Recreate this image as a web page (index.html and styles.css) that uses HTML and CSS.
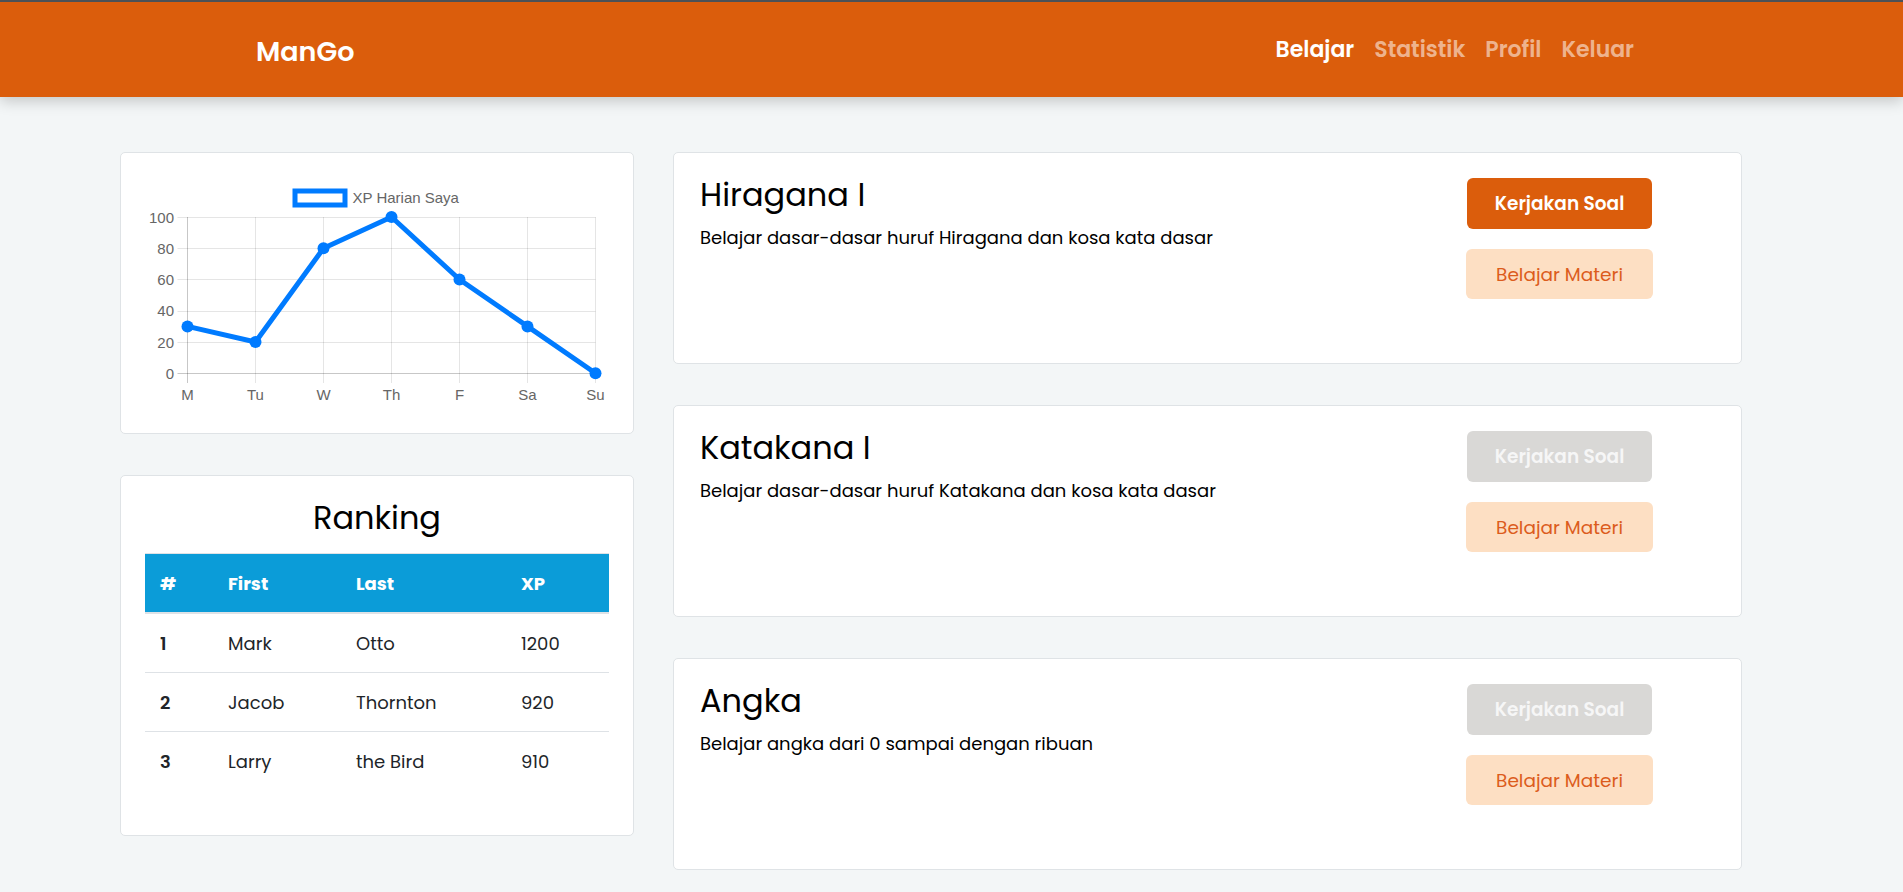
FILE: index.html
```html
<!DOCTYPE html>
<html lang="id">
<head>
<meta charset="utf-8">
<title>ManGo</title>
<link rel="stylesheet" href="styles.css">
</head>
<body>
<header class="navbar">
  <a class="brand" href="#">ManGo</a>
  <nav class="nav-links">
    <a class="nav-link active" href="#">Belajar</a>
    <a class="nav-link" href="#">Statistik</a>
    <a class="nav-link" href="#">Profil</a>
    <a class="nav-link" href="#">Keluar</a>
  </nav>
</header>
<main class="layout">
  <aside class="side">
    <section class="card chart-card">
      <svg class="chart" width="512" height="280" viewBox="0 0 512 280" xmlns="http://www.w3.org/2000/svg">
        <rect x="174" y="38" width="50" height="14" fill="#fff" stroke="#007bff" stroke-width="5"/>
        <text class="chart-text" x="231.5" y="49.5">XP Harian Saya</text>
        <g stroke="rgba(0,0,0,0.1)" stroke-width="1">
          <line x1="56.5" y1="64.5" x2="474.5" y2="64.5"/>
          <line x1="56.5" y1="95.5" x2="474.5" y2="95.5"/>
          <line x1="56.5" y1="126.5" x2="474.5" y2="126.5"/>
          <line x1="56.5" y1="158.5" x2="474.5" y2="158.5"/>
          <line x1="56.5" y1="189.5" x2="474.5" y2="189.5"/>
          <line x1="134.5" y1="64" x2="134.5" y2="230"/>
          <line x1="202.5" y1="64" x2="202.5" y2="230"/>
          <line x1="270.5" y1="64" x2="270.5" y2="230"/>
          <line x1="338.5" y1="64" x2="338.5" y2="230"/>
          <line x1="406.5" y1="64" x2="406.5" y2="230"/>
          <line x1="474.5" y1="64" x2="474.5" y2="230"/>
        </g>
        <g stroke="rgba(0,0,0,0.22)" stroke-width="1">
          <line x1="56.5" y1="220.5" x2="474.5" y2="220.5"/>
          <line x1="66.5" y1="64" x2="66.5" y2="230"/>
        </g>
        <g class="chart-text" text-anchor="end">
          <text x="53" y="69.5">100</text>
          <text x="53" y="100.8">80</text>
          <text x="53" y="132">60</text>
          <text x="53" y="163.3">40</text>
          <text x="53" y="194.5">20</text>
          <text x="53" y="225.8">0</text>
        </g>
        <g class="chart-text" text-anchor="middle">
          <text x="66.5" y="247">M</text>
          <text x="134.5" y="247">Tu</text>
          <text x="202.5" y="247">W</text>
          <text x="270.5" y="247">Th</text>
          <text x="338.5" y="247">F</text>
          <text x="406.5" y="247">Sa</text>
          <text x="474.5" y="247">Su</text>
        </g>
        <polyline points="66.5,173.4 134.5,189 202.5,95.3 270.5,64 338.5,126.5 406.5,173.4 474.5,220.3" fill="none" stroke="#007bff" stroke-width="5" stroke-linejoin="round"/>
        <g fill="#007bff">
          <circle cx="66.5" cy="173.4" r="6"/>
          <circle cx="134.5" cy="189" r="6"/>
          <circle cx="202.5" cy="95.3" r="6"/>
          <circle cx="270.5" cy="64" r="6"/>
          <circle cx="338.5" cy="126.5" r="6"/>
          <circle cx="406.5" cy="173.4" r="6"/>
          <circle cx="474.5" cy="220.3" r="6"/>
        </g>
      </svg>
    </section>
    <section class="card rank-card">
      <h2 class="rank-title">Ranking</h2>
      <table class="rank-table">
        <colgroup>
          <col class="c-no"><col class="c-first"><col class="c-last"><col class="c-xp">
        </colgroup>
        <thead>
          <tr><th>#</th><th>First</th><th>Last</th><th>XP</th></tr>
        </thead>
        <tbody>
          <tr><th>1</th><td>Mark</td><td>Otto</td><td>1200</td></tr>
          <tr><th>2</th><td>Jacob</td><td>Thornton</td><td>920</td></tr>
          <tr><th>3</th><td>Larry</td><td>the Bird</td><td>910</td></tr>
        </tbody>
      </table>
    </section>
  </aside>
  <section class="lessons">
    <article class="card lesson">
      <div class="lesson-text">
        <h3>Hiragana I</h3>
        <p>Belajar dasar-dasar huruf Hiragana dan kosa kata dasar</p>
      </div>
      <div class="lesson-actions">
        <button class="btn btn-main">Kerjakan Soal</button>
        <button class="btn btn-soft">Belajar Materi</button>
      </div>
    </article>
    <article class="card lesson">
      <div class="lesson-text">
        <h3>Katakana I</h3>
        <p>Belajar dasar-dasar huruf Katakana dan kosa kata dasar</p>
      </div>
      <div class="lesson-actions">
        <button class="btn btn-main btn-disabled">Kerjakan Soal</button>
        <button class="btn btn-soft">Belajar Materi</button>
      </div>
    </article>
    <article class="card lesson">
      <div class="lesson-text">
        <h3>Angka</h3>
        <p>Belajar angka dari 0 sampai dengan ribuan</p>
      </div>
      <div class="lesson-actions">
        <button class="btn btn-main btn-disabled">Kerjakan Soal</button>
        <button class="btn btn-soft">Belajar Materi</button>
      </div>
    </article>
  </section>
</main>
</body>
</html>
```

FILE: styles.css
```css
html {
  border-top: 2px solid #4b5157;
  background: #f3f6f7;
  overflow-y: scroll;
}

::-webkit-scrollbar {
  width: 4px;
}

::-webkit-scrollbar-track {
  background: #f1f1f1;
}

::-webkit-scrollbar-thumb {
  background: #c1c1c1;
}

body {
  margin: 0;
  font-family: "Poppins", "Open Sans", sans-serif;
  color: #000;
}

.navbar {
  height: 95px;
  background: #db5d0c;
  display: flex;
  align-items: center;
  justify-content: space-between;
  padding: 0 269px 0 256px;
  box-shadow: 0 4px 14px rgba(0, 0, 0, 0.2);
}

.brand {
  color: #fff;
  text-decoration: none;
  font-size: 27px;
  font-weight: 600;
  margin-top: 4px;
}

.nav-links {
  display: flex;
  gap: 20px;
}

.nav-link {
  color: rgba(255, 255, 255, 0.55);
  text-decoration: none;
  font-size: 22px;
  font-weight: 600;
}

.nav-link.active {
  color: #fff;
}

.layout {
  display: grid;
  grid-template-columns: 514px 1069px;
  column-gap: 39px;
  align-items: start;
  padding: 55px 0 22px 120px;
}

.side,
.lessons {
  display: flex;
  flex-direction: column;
  gap: 41px;
}

.card {
  background: #fff;
  border: 1px solid #dfe3e6;
  border-radius: 5px;
  box-sizing: border-box;
}

.chart-card {
  height: 282px;
}

.chart {
  display: block;
}

.chart-text {
  font-family: "Liberation Sans", Arial, sans-serif;
  font-size: 15px;
  fill: #666;
}

.rank-card {
  height: 361px;
  padding: 23px 24px 0;
}

.rank-title {
  margin: 0 0 16px;
  text-align: center;
  font-size: 32px;
  font-weight: 400;
  line-height: 1.2;
}

.rank-table {
  width: 100%;
  border-collapse: collapse;
  font-size: 18px;
  color: #212529;
}

.c-no { width: 68px; }
.c-first { width: 128px; }
.c-last { width: 165px; }
.c-xp { width: 103px; }

.rank-table th,
.rank-table td {
  text-align: left;
  padding: 0 15px;
  border-top: 1px solid #dee2e6;
}

.rank-table thead th {
  height: 58px;
  background: #0b9cd8;
  color: #fff;
  font-weight: 700;
  border-bottom: 2px solid #dee2e6;
}

.rank-table tbody th,
.rank-table tbody td {
  height: 58px;
}

.rank-table tbody th {
  font-weight: 600;
}

.lesson {
  height: 212px;
  display: flex;
  justify-content: space-between;
  padding: 23px 88px 0 26px;
}

.lesson h3 {
  margin: 0;
  font-size: 32px;
  font-weight: 400;
  line-height: 1.2;
}

.lesson p {
  margin: 10px 0 0;
  font-size: 18px;
  line-height: 1.5;
}

.lesson-actions {
  display: flex;
  flex-direction: column;
  align-items: center;
  gap: 20px;
  padding-top: 2px;
}

.btn {
  border: 0;
  border-radius: 6px;
  font-family: inherit;
  font-size: 18.5px;
  cursor: pointer;
}

.btn-main {
  width: 185px;
  height: 51px;
  background: #db5d0c;
  color: #fff;
  font-weight: 600;
}

.btn-disabled {
  background: #d9d8d6;
  color: #f6f6f6;
}

.btn-soft {
  width: 187px;
  height: 50px;
  background: #fddfc3;
  color: #dc5c1c;
  font-weight: 400;
}
```
